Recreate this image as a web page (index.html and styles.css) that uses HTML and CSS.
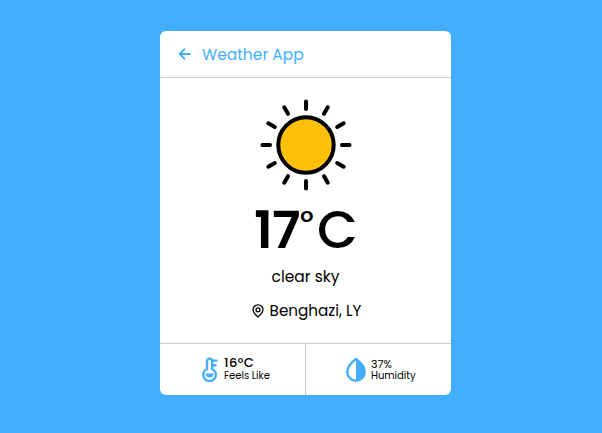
FILE: index.html
```html
<!DOCTYPE html>
<html lang="en">
<head>
<meta charset="utf-8">
<title>Weather App</title>
<link rel="stylesheet" href="styles.css">
</head>
<body>
<main class="card">
  <header class="header">
    <svg class="back" viewBox="0 0 14 14"><path d="M12.6 7H2M7 1.7 1.7 7 7 12.3"/></svg>
    <h1 class="title">Weather App</h1>
  </header>
  <section class="weather">
    <svg class="sun" viewBox="-46 -46 92 92">
      <circle r="27.7"/>
      <path id="rays" d="M0-43.500V-36M0 43.500V36M-43.500 0H-36M43.500 0H36"/>
      <use href="#rays" transform="rotate(30)"/>
      <use href="#rays" transform="rotate(60)"/>
    </svg>
    <div class="temp"><span class="number">17</span><span class="deg">°</span><span class="unit">C</span></div>
    <div class="condition">clear sky</div>
    <div class="location">
      <svg class="pin" viewBox="0 0 12 14"><path d="M6 12.900C3.500 10.700 1 8.600 1 5.800a5 5 0 0 1 10 0C11 8.600 8.500 10.700 6 12.900Z"/><circle cx="6" cy="5.800" r="2"/></svg>
      <span class="place">Benghazi, LY</span>
    </div>
  </section>
  <footer class="details">
    <div class="detail feels">
      <svg class="thermo" viewBox="0 0 16 25"><path class="line" d="M5 12V4.200a2.600 2.600 0 0 1 5.200 0V12a6.300 6.300 0 1 1-5.200 0ZM10 3.600H15.500M10 8.200H14.500"/><path class="fill" d="M3.700 16.500h7.800a3.900 3.900 0 0 1-7.800 0Z"/></svg>
      <div class="text"><span class="value strong">16°C</span><span class="label">Feels Like</span></div>
    </div>
    <div class="detail humidity">
      <svg class="drop" viewBox="0 0 20 25"><path class="line" d="M10 2C6.500 4.500 1.300 9.500 1.300 15a8.700 8.700 0 0 0 17.400 0C18.700 9.500 13.500 4.500 10 2Z"/><path class="fill" d="M10 2C13.500 4.500 18.700 9.500 18.700 15a8.700 8.700 0 0 1-8.700 8.700Z"/></svg>
      <div class="text"><span class="value">37%</span><span class="label">Humidity</span></div>
    </div>
  </footer>
</main>
</body>
</html>
```
FILE: styles.css
```css
* { box-sizing: border-box; }
body {
  margin: 0;
  height: 433px;
  padding: 31px 151px 38px 160px;
  background: #43affc;
  color: #000;
  font-family: Poppins, Inter, sans-serif;
  overflow: hidden;
}
svg { display: block; fill: none; flex: none; }
.card {
  height: 364px;
  background: #fff;
  border-radius: 6px;
  display: flex;
  flex-direction: column;
}
.header {
  height: 47px;
  border-bottom: 1px solid #ccc;
  display: flex;
  align-items: center;
  gap: 10px;
  padding-left: 18px;
  color: #43affc;
}
.back { width: 14px; height: 14px; stroke: currentColor; stroke-width: 1.8; }
.title { margin: 2px 0 0; font-size: 15.5px; font-weight: 400; line-height: 22px; }
.weather {
  height: 265px;
  padding-top: 21px;
  display: flex;
  flex-direction: column;
  align-items: center;
}
.sun { width: 92px; height: 92px; fill: #ffc107; stroke: #000; stroke-width: 4; stroke-linecap: round; }
.temp {
  display: flex;
  width: 101px;
  height: 62px;
  margin-top: 8px;
  line-height: 62px;
  font-size: 53px;
  font-weight: 500;
}
.number { width: 46px; margin-left: -1px; font-size: 52px; font-weight: 600; letter-spacing: -0.7px; }
.deg { width: 17px; font-size: 32px; line-height: 45px; }
.unit { width: 38px; }
.condition { margin-top: 5px; font-size: 15.500px; line-height: 22px; }
.location { display: flex; align-items: center; gap: 6px; margin-top: 11px; padding-left: 2px; }
.pin { width: 12px; height: 14px; stroke: #000; stroke-width: 1.3; }
.place { font-size: 15.2px; line-height: 23px; }
.details { height: 52px; border-top: 1px solid #ccc; display: flex; }
.detail { display: flex; align-items: center; }
.feels { width: 146px; padding-left: 42px; gap: 6px; border-right: 1px solid #ccc; }
.humidity { width: 145px; padding-left: 40px; gap: 5px; }
.thermo { width: 16px; height: 25px; margin-top: -1px; }
.drop { width: 20px; height: 25px; margin-top: -1px; }
.line { stroke: #43affc; stroke-width: 2.4; }
.fill { fill: #43affc; }
.text { display: flex; flex-direction: column; }
.value { font-size: 11px; line-height: 12px; }
.strong { font-size: 13px; font-weight: 500; letter-spacing: 0.4px; margin-top: -1px; padding-bottom: 1px; }
.label { font-size: 10px; line-height: 12px; }
```
